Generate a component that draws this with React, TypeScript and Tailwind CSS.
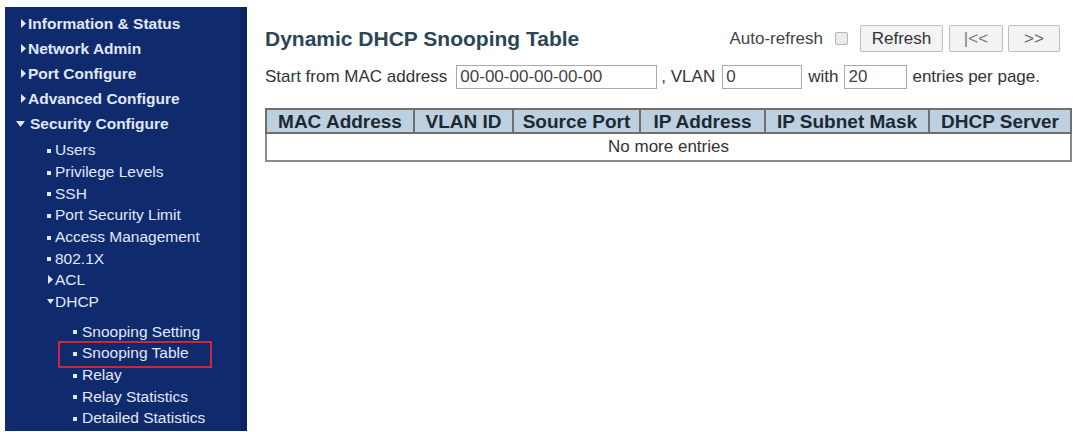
import React from "react";

const ink = "#e1e7f6";

function Tri({ dir }: { dir: "right" | "down" }) {
    if (dir === "right") {
        return (
            <svg width="5" height="9" viewBox="0 0 5 9" className="shrink-0">
                <path d="M0 0L5 4.5L0 9Z" fill={ink} />
            </svg>
        );
    }
    return (
        <svg width="9" height="6" viewBox="0 0 9 6" className="shrink-0">
            <path d="M0 0H9L4.5 6Z" fill={ink} />
        </svg>
    );
}

function Dot() {
    return <span className="inline-block w-[4px] h-[4px] bg-[#e1e7f6] shrink-0 mt-[2px]" />;
}

const topItems = ["Information & Status", "Network Admin", "Port Configure", "Advanced Configure"];
const securityItems = ["Users", "Privilege Levels", "SSH", "Port Security Limit", "Access Management", "802.1X"];
const dhcpItems = ["Snooping Setting", "Snooping Table", "Relay", "Relay Statistics", "Detailed Statistics"];

function Sidebar() {
    return (
        <nav className="mt-[7px] ml-[5px] w-[242px] h-[424px] bg-[#0f2b6d] border-r-[6px] border-[#0b2360] pt-[4px] text-[#e1e7f6] shrink-0">
            {topItems.map((t) => (
                <div key={t} className="h-[25px] flex items-center pl-[16px] gap-[2px] text-[15.5px] font-bold">
                    <Tri dir="right" />
                    <span>{t}</span>
                </div>
            ))}
            <div className="h-[25px] flex items-center pl-[11px] gap-[5px] text-[15.5px] font-bold">
                <Tri dir="down" />
                <span>Security Configure</span>
            </div>

            <div className="mt-[3px] text-[15.5px]">
                {securityItems.map((t) => (
                    <div key={t} className="h-[21.7px] flex items-center pl-[42px] gap-[4px]">
                        <Dot />
                        <span>{t}</span>
                    </div>
                ))}
                <div className="h-[21.7px] flex items-center pl-[43px] gap-[2px]">
                    <Tri dir="right" />
                    <span>ACL</span>
                </div>
                <div className="h-[21.7px] flex items-center pl-[42px] gap-[1px]">
                    <svg width="7" height="5" viewBox="0 0 7 5" className="shrink-0">
                        <path d="M0 0H7L3.5 5Z" fill={ink} />
                    </svg>
                    <span>DHCP</span>
                </div>

                <div className="mt-[8px]">
                    {dhcpItems.map((t) => (
                        <div key={t} className="relative h-[21.7px] flex items-center pl-[68px] gap-[5px]">
                            <Dot />
                            <span>{t}</span>
                            {t === "Snooping Table" && (
                                <span className="absolute left-[53px] top-[-1px] w-[154px] h-[26.5px] border-2 border-[#c9283e]" />
                            )}
                        </div>
                    ))}
                </div>
            </div>
        </nav>
    );
}

const btn = "h-[27px] bg-[#f3f3f3] border border-[#bdbdbd] rounded-[2px] text-[17px] flex items-center justify-center";
const input = "h-[24px] border border-[#a9a9a9] bg-white px-[3px] text-[17px] text-[#444] flex items-center";

const cols = [
    { name: "MAC Address", w: 148 },
    { name: "VLAN ID", w: 99 },
    { name: "Source Port", w: 127 },
    { name: "IP Address", w: 125 },
    { name: "IP Subnet Mask", w: 164 },
    { name: "DHCP Server", w: 142 },
];

export default function App() {
    return (
        <div className="w-[1073px] h-[432px] bg-white flex items-start overflow-hidden font-['Liberation_Sans',Arial,sans-serif]">
            <Sidebar />

            <main className="ml-[18px] pt-[25px] w-[805px] text-[#333]">
                <div className="h-[27px] flex items-center justify-between">
                    <h1 className="text-[21px] font-bold text-[#2c4557] leading-none">Dynamic DHCP Snooping Table</h1>
                    <div className="flex items-center pr-[10px]">
                        <span className="text-[17px] text-[#444]">Auto-refresh</span>
                        <span className="ml-[12px] w-[13px] h-[13px] border border-[#b5b5b5] bg-[#ececec] rounded-[2px]" />
                        <button className={btn + " ml-[12px] w-[83px] text-[#333]"}>Refresh</button>
                        <button className={btn + " ml-[6px] w-[54px] text-[#7a7a7a]"}>|&lt;&lt;</button>
                        <button className={btn + " ml-[5px] w-[52px] text-[#666]"}>&gt;&gt;</button>
                    </div>
                </div>

                <div className="mt-[13px] h-[24px] flex items-center text-[17px] text-[#333]">
                    <span>Start from MAC address</span>
                    <div className={input + " ml-[9px] w-[201px]"}>00-00-00-00-00-00</div>
                    <span className="ml-[4px]">, VLAN</span>
                    <div className={input + " ml-[7px] w-[80px]"}>0</div>
                    <span className="ml-[6px]">with</span>
                    <div className={input + " ml-[6px] w-[63px]"}>20</div>
                    <span className="ml-[5px]">entries per page.</span>
                </div>

                <table className="mt-[19px] w-[805px] table-fixed border-collapse border-2 border-[#7a7a7a]">
                    <colgroup>
                        {cols.map((c) => (
                            <col key={c.name} style={{ width: c.w }} />
                        ))}
                    </colgroup>
                    <thead>
                        <tr>
                            {cols.map((c) => (
                                <th key={c.name} className="h-[24px] p-0 border-2 border-[#6f6f6f] bg-[#bdd0df] text-[19px] font-bold text-[#1c2a35] text-center whitespace-nowrap leading-none">
                                    {c.name}
                                </th>
                            ))}
                        </tr>
                    </thead>
                    <tbody>
                        <tr>
                            <td colSpan={6} className="h-[26px] p-0 border-2 border-[#8a8a8a] text-center text-[17px] text-[#333]">
                                No more entries
                            </td>
                        </tr>
                    </tbody>
                </table>
            </main>
        </div>
    );
}
